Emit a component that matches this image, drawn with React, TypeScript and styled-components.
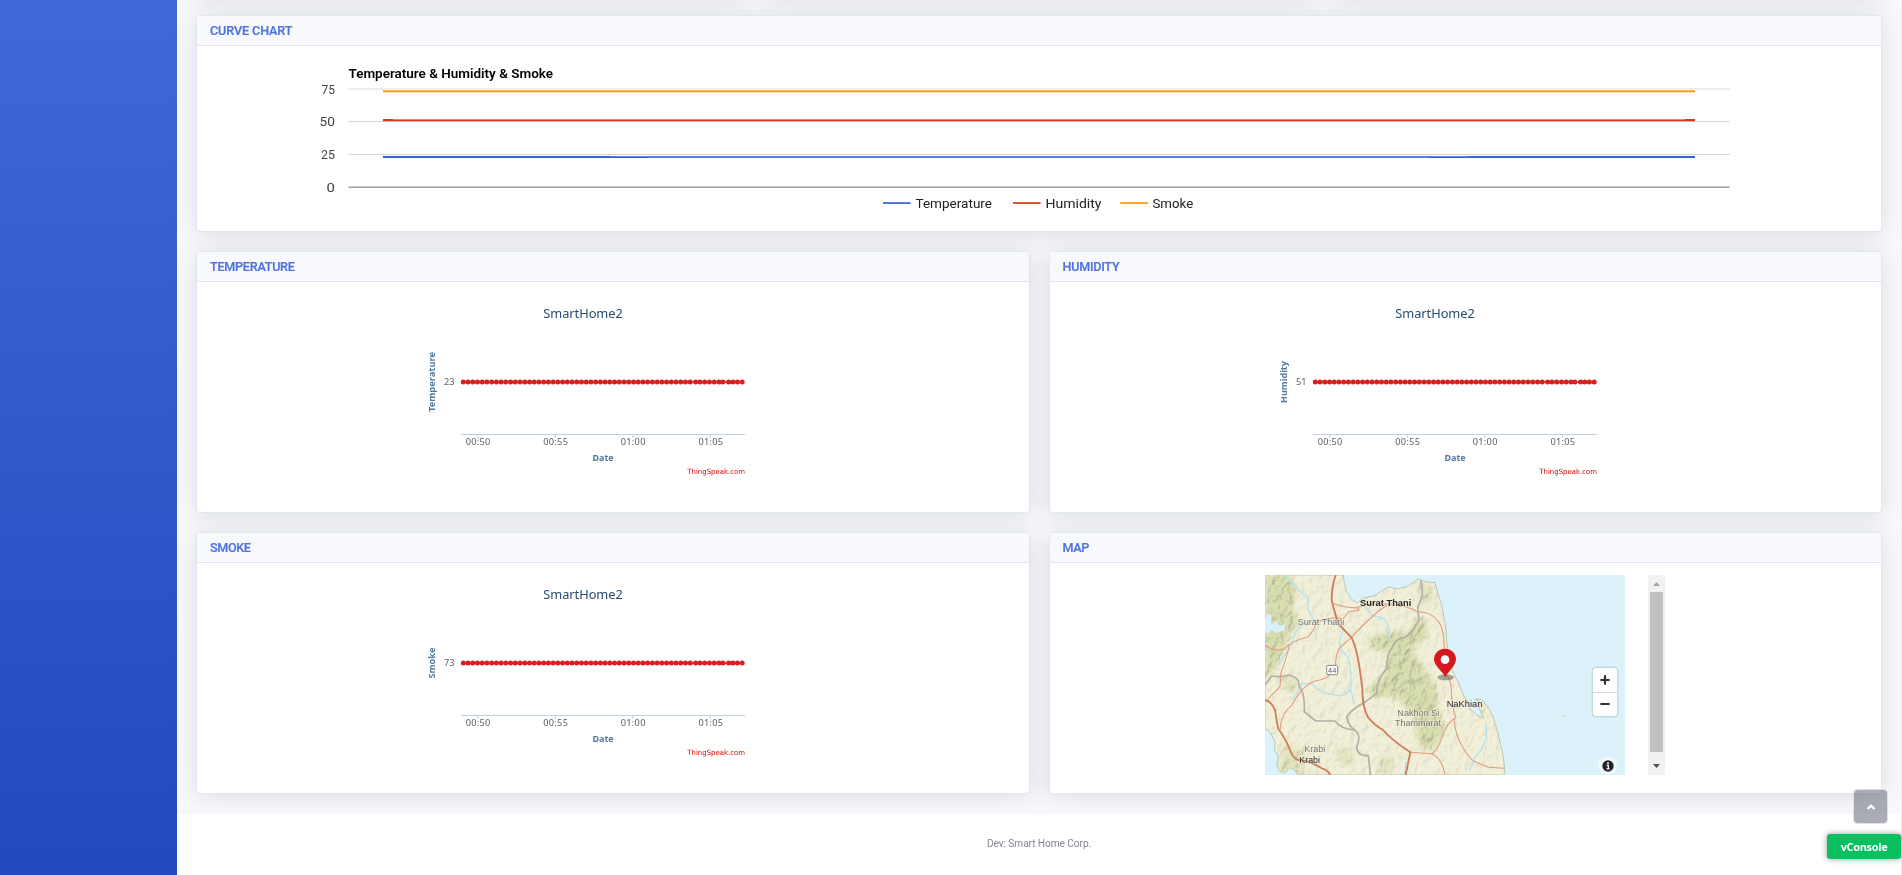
import React from 'react';
import styled, { createGlobalStyle } from 'styled-components';

const GlobalStyle = createGlobalStyle`
  * { box-sizing: border-box; }
  html, body { margin: 0; height: 100%; }
  body {
    overflow: hidden;
    font-family: Roboto, "Liberation Sans", sans-serif;
    background: #fff;
  }
`;

const Page = styled.div`
  display: flex;
  width: 100%;
  height: 875px;
  overflow: hidden;
`;

const Sidebar = styled.aside`
  flex: 0 0 177px;
  background: linear-gradient(180deg, #4168d7 0%, #224abe 100%);
`;

const Content = styled.div`
  flex: 1;
  min-width: 0;
  display: flex;
  flex-direction: column;
  border-right: 1px solid #ececf0;
`;

const Main = styled.main`
  display: flex;
  flex-direction: column;
  gap: 19px;
  height: 814px;
  padding: 0 19px;
  background: #f8f9fc;
`;

const Row = styled.div<{ $cols: number }>`
  display: grid;
  grid-template-columns: repeat(${p => p.$cols}, 1fr);
  gap: 19px;
`;

const SummaryRow = styled(Row)`
  margin-top: -44px;
`;

const Card = styled.section<{ $height: number }>`
  display: flex;
  flex-direction: column;
  height: ${p => p.$height}px;
  background: #fff;
  border: 1px solid #e3e6f0;
  border-radius: 4px;
  box-shadow: 0 2px 23px rgba(58, 59, 69, 0.15);
`;

const CardHeader = styled.header`
  flex: 0 0 30px;
  display: flex;
  align-items: center;
  padding: 1px 13px 0;
  background: #f8f9fc;
  border-bottom: 1px solid #e3e6f0;
  border-radius: 3px 3px 0 0;
`;

const CardTitle = styled.h6<{ $spacing: number }>`
  margin: 0;
  font-size: 12.6px;
  line-height: 16px;
  font-weight: 500;
  letter-spacing: ${p => p.$spacing}px;
  color: #4e73df;
  text-transform: uppercase;
  -webkit-text-stroke: 0.2px #4e73df;
`;

const CardBody = styled.div`
  display: flex;
  justify-content: center;
  padding-top: 12px;
`;

const Frame = styled.div`
  display: flex;
  justify-content: space-between;
  width: 400px;
  height: 200px;
`;

const MapView = styled.div`
  position: relative;
  width: 360px;
  height: 200px;
  overflow: hidden;
  background: #dcf2fb;
`;

const ZoomControl = styled.div`
  position: absolute;
  left: 328px;
  top: 93px;
  width: 24px;
  height: 48px;
  display: flex;
  flex-direction: column;
  background: #fff;
  border-radius: 3px;
  box-shadow: 0 0 0 1.5px rgba(0, 0, 0, 0.1);
`;

const ZoomButton = styled.button`
  flex: 1;
  display: flex;
  align-items: center;
  justify-content: center;
  padding: 0;
  border: 0;
  background: none;
  & + & { border-top: 1px solid #ddd; }
`;

const InfoButton = styled.div`
  position: absolute;
  left: 333px;
  top: 181px;
  display: flex;
  align-items: center;
  justify-content: center;
  width: 19px;
  height: 19px;
  border-radius: 50%;
  background: rgba(255, 255, 255, 0.5);
`;

const ScrollTrack = styled.div`
  display: flex;
  flex-direction: column;
  width: 17px;
  background: #f1f1f1;
`;

const ScrollArrow = styled.svg`
  width: 17px;
  height: 17px;
`;

const ScrollThumb = styled.div`
  width: 13px;
  height: 160px;
  margin: 0 2px 6px;
  background: #c1c1c1;
`;

const Footer = styled.footer`
  flex: 1;
  padding-top: 22px;
  text-align: center;
  font-size: 10.2px;
  line-height: 16px;
  letter-spacing: -0.1px;
  color: #858796;
  background: #fff;
`;

const ScrollTop = styled.a`
  position: fixed;
  left: 1853px;
  top: 789px;
  width: 35px;
  height: 35px;
  display: flex;
  align-items: center;
  justify-content: center;
  border: 1px solid #dddfeb;
  border-radius: 4px;
  background: rgba(90, 92, 105, 0.5);
  background-clip: padding-box;
`;

const ConsoleButton = styled.button`
  position: fixed;
  left: 1827px;
  top: 834px;
  width: 74px;
  height: 25px;
  padding: 0 0 1px;
  border: 0;
  border-radius: 3px;
  background: #07c160;
  color: #fff;
  font: 700 11px/23px "Open Sans", "Noto Sans", sans-serif;
  letter-spacing: -0.35px;
  box-shadow: 0 0 6px rgba(0, 0, 0, 0.4);
`;

const PlotSvg = styled.svg`
  display: block;
  flex: none;
`;

const SANS = 'Roboto, "Liberation Sans", sans-serif';
const HUMANIST = '"Noto Sans", "Open Sans", sans-serif';

const legend = [
  { name: 'Temperature', color: '#3366cc', x: 686, textX: 718.5, width: 76.5 },
  { name: 'Humidity', color: '#dc3912', x: 816, textX: 848.5, width: 56 },
  { name: 'Smoke', color: '#ff9900', x: 923.3, textX: 955.5, width: 40.7 },
];

const ticks = [
  { label: '75', text: 48, width: 13.5 },
  { label: '50', text: 80, width: 15.4 },
  { label: '25', text: 113, width: 14 },
  { label: '0', text: 146, width: 8.4 },
];

function CurveChart() {
  return (
    <PlotSvg width={1683} height={184} fontFamily={SANS} fontSize={13.5}>
      <text x={151.5} y={32} fontWeight={600} fontSize={13} textLength={204.5} lengthAdjust="spacingAndGlyphs">
        Temperature &amp; Humidity &amp; Smoke
      </text>
      {ticks.map(t => (
        <text key={t.label} x={138 - t.width} y={t.text} fill="#444" textLength={t.width} lengthAdjust="spacingAndGlyphs">
          {t.label}
        </text>
      ))}
      <rect x={151.4} y={42} width={1381.4} height={2} fill="#ededed" />
      <rect x={151.4} y={75} width={1381.4} height={1} fill="#d6d6d6" />
      <rect x={151.4} y={108} width={1381.4} height={1} fill="#d6d6d6" />
      <rect x={151.4} y={140} width={1381.4} height={1} fill="#c8c8c8" />
      <rect x={151.4} y={141} width={1381.4} height={1} fill="#a8a8a8" />
      <rect x={186} y={44.4} width={1312} height={1.9} fill="#ff9900" />
      <rect x={186} y={73.4} width={1312} height={1.8} fill="#dc3912" />
      <rect x={186} y={73} width={10} height={2} fill="#dc3912" />
      <rect x={1488} y={73} width={10} height={2} fill="#dc3912" />
      <rect x={186} y={110} width={1312} height={2} fill="#3366cc" />
      <rect x={413} y={110} width={38} height={1} fill="#5c85d6" />
      <rect x={451} y={110} width={781} height={2} fill="#5580d6" />
      <rect x={1232} y={110} width={40} height={1} fill="#5c85d6" />
      {legend.map(l => (
        <g key={l.name}>
          <rect x={l.x} y={156.2} width={27.6} height={1.7} fill={l.color} />
          <text x={l.textX} y={162} fill="#222" textLength={l.width} lengthAdjust="spacingAndGlyphs">{l.name}</text>
        </g>
      ))}
    </PlotSvg>
  );
}

const tail = [282.7, 287, 291.7, 296.5, 301.2, 305.9, 309.8, 315.6, 319.8, 324.4, 329.2];
const points = [...Array.from({ length: 49 }, (_, i) => 50.3 + i * 4.727), ...tail];

const times = [
  { label: '00:50', x: 64.7 },
  { label: '00:55', x: 142.3 },
  { label: '01:00', x: 219.8 },
  { label: '01:05', x: 297.4 },
];

function FieldChart({ field, value, length }: { field: string; value: string; length: number }) {
  return (
    <PlotSvg width={400} height={200} fontFamily={HUMANIST}>
      <text x={130.3} y={24} fontSize={12.8} fill="#274b6d" textLength={79.5}>SmartHome2</text>
      <text
        transform="translate(21.8 88) rotate(-90)"
        x={-length / 2}
        y={0}
        fontSize={9.6}
        fontWeight={700}
        fill="#54799f"
        textLength={length}
        lengthAdjust="spacingAndGlyphs"
      >
        {field}
      </text>
      <text x={31} y={91} fontSize={9.2} fill="#606060" textLength={10.4}>{value}</text>
      <path d="M48 140.5H332" stroke="#c0d0e0" />
      {times.map(t => (
        <g key={t.label}>
          <path d={`M${t.x} 140v4`} stroke="#c0d0e0" />
          <text x={t.x - 12} y={151} fontSize={9.2} fill="#606060" textLength={24.6}>{t.label}</text>
        </g>
      ))}
      <path d="M50 88H330" stroke="#d62020" strokeWidth={1.7} />
      {points.map((x, i) => <circle key={i} cx={x} cy={88} r={2.5} fill="#d62020" />)}
      <text x={179.5} y={167} fontSize={9.6} fontWeight={700} fill="#54799f" textLength={21.2} lengthAdjust="spacingAndGlyphs">Date</text>
      <text x={274.3} y={179.8} fontSize={7.2} fontFamily='"DejaVu Sans", sans-serif' fill="#d00" textLength={57.8} lengthAdjust="spacingAndGlyphs">
        ThingSpeak.com
      </text>
    </PlotSvg>
  );
}

const LAND =
  'M30 30H265L268 55 275 80 290 103 308 114 322 100 360 92 380 78 400 66 430 72 462 62 478 50 490 42 510 50 540 53 550 90 560 120 568 165 573 190 575 230 582 280 596 325 610 352 625 390 640 412 645 432 668 452 686 458 672 430 675 412 660 402 680 404 702 430 716 460 730 510 742 560 748 600 750 630H128L120 615 105 608 92 622 75 620 65 600 70 575 58 555 60 530 50 510 40 496 30 492Z';

const primaryRoads = [
  'M242 30Q230 65 230 105 240 150 252 178 272 200 290 218 305 250 314 310L322 370Q322 430 340 458 360 482 384 495 410 525 466 562L458 600 452 630',
  'M30 405Q48 408 60 435 64 465 70 492 92 520 108 562 116 580 130 585L160 590Q185 600 200 610 215 612 226 629',
];

const secondaryRoads = [
  'M395 120Q340 160 290 217L255 248Q240 268 242 310 220 345 180 348 140 362 110 422 78 445 76 492',
  'M30 240Q55 262 88 252 110 226 160 215 180 190 185 172 220 155 258 160',
  'M103 240Q92 290 78 322L75 365 40 400',
  'M238 116Q275 130 308 128L312 136 280 140Q268 162 248 168',
  'M300 130Q345 110 398 118 470 125 485 140 530 140 545 165 567 180 568 252',
  'M576 332Q590 345 590 400L598 445 603 458Q575 470 560 520 548 555 530 566L466 562',
  'M530 566Q560 578 570 629',
  'M597 460Q602 515 620 540 640 580 660 590L700 607 746 610',
];

const boundaries = [
  'M498 50Q505 75 500 98L488 128 492 165Q470 205 450 218 425 215 410 250 396 265 395 310 365 345 365 385L332 410Q290 432 275 455 280 485 305 500 318 515 305 545 305 572 340 572L346 628',
  'M30 360L50 333Q85 338 100 330 135 336 132 365 150 380 148 440L182 468 240 468Q260 494 300 495',
];

const rivers = [
  'M95 35L130 75 160 98 158 130 175 165 135 182Q118 200 110 240L70 300',
  'M175 165L230 170 265 190 252 235Q260 260 278 275 288 300 288 355 290 390 250 392 190 385 172 356L142 355 115 402',
  'M286 370L297 415',
  'M330 125L350 150 388 162 402 190 402 222',
  'M693 475L695 520 680 552 660 578 645 615',
  'M453 590L448 629',
];

interface Label { text: string; x: number; y: number; w: number; fill: string; bold?: boolean }
const labels: Label[] = [
  { text: 'Surat Thani', x: 315, y: 122, w: 154, fill: '#222', bold: true },
  { text: 'Surat Thani', x: 128, y: 181, w: 140, fill: '#76766f' },
  { text: 'Nakhon Si', x: 427, y: 452, w: 126, fill: '#76766f' },
  { text: 'Thammarat', x: 420, y: 482, w: 138, fill: '#76766f' },
  { text: 'NaKhian', x: 575, y: 425, w: 107, fill: '#222' },
  { text: 'Krabi', x: 148, y: 561, w: 63, fill: '#76766f' },
  { text: 'Krabi', x: 133, y: 595, w: 62, fill: '#222' },
];

function TerrainMap() {
  return (
    <MapView>
      <PlotSvg width={360} height={200} viewBox="30 30 1080 600">
        <defs>
          <clipPath id="land"><path d={LAND} /></clipPath>
          <filter id="soft" x="-20%" y="-20%" width="140%" height="140%"><feGaussianBlur stdDeviation="8" /></filter>
          <filter id="relief" x="0" y="0" width="100%" height="100%" colorInterpolationFilters="sRGB">
            <feTurbulence type="fractalNoise" baseFrequency="0.055 0.04" numOctaves={3} seed={7} />
            <feColorMatrix values="0 0 0 0 0 0 0 0 0 0 0 0 0 0 0 1 0 0 0 0" result="height" />
            <feDiffuseLighting in="height" surfaceScale={14} diffuseConstant={1.15} lightingColor="#ffffff">
              <feDistantLight azimuth={225} elevation={60} />
            </feDiffuseLighting>
          </filter>
          <mask id="hills">
            <g fill="#fff" filter="url(#soft)">
              <path d="M30 30H105L125 70 112 130 135 170 105 210 85 260 50 330 30 340Z" />
              <path d="M335 220L400 200 455 205 490 150 512 170 520 215 470 250 505 310 545 360 545 420 570 490 530 560 490 540 470 440 420 395 350 395 335 375 390 330 400 260 350 250Z" />
              <path d="M70 330L135 345 120 385 90 380ZM85 540L145 550 150 630H70ZM240 545L300 560 290 610 250 590ZM480 50L530 60 540 110 500 120Z" opacity=".6" />
              <path d="M370 580L420 570 410 629H370ZM655 420L685 430 695 470 675 460Z" opacity=".6" />
            </g>
          </mask>
        </defs>
        <rect x="30" y="30" width="1080" height="600" fill="#dcf2fb" />
        <path d={LAND} fill="#f2efd6" stroke="#b9c6b8" strokeWidth="3" />
        <g clipPath="url(#land)">
          <rect x="30" y="30" width="730" height="600" filter="url(#relief)" opacity=".08" style={{ mixBlendMode: 'multiply' }} />
          <g mask="url(#hills)">
            <rect x="30" y="30" width="730" height="600" fill="#d9deb0" />
            <rect x="30" y="30" width="730" height="600" filter="url(#relief)" opacity=".22" style={{ mixBlendMode: 'multiply' }} />
          </g>
          <path d="M30 170L38 145 48 150 50 178 65 168 72 182 92 178 88 196 65 204 50 196 40 206 30 200Z" fill="#d8f1fa" />
        </g>
        <g fill="none" strokeLinecap="round" strokeLinejoin="round">
          <g stroke="#b2e2f2" strokeWidth="4">{rivers.map(d => <path key={d} d={d} />)}</g>
          <g stroke="#b1afa6" strokeWidth="5">{boundaries.map(d => <path key={d} d={d} />)}</g>
          <g stroke="#e09b80" strokeWidth="3.2">{secondaryRoads.map(d => <path key={d} d={d} />)}</g>
          <g stroke="#d07d5c" strokeWidth="5.6">{primaryRoads.map(d => <path key={d} d={d} />)}</g>
        </g>
        <rect x="215" y="301" width="33" height="28" rx="4" fill="#fff" stroke="#888" strokeWidth="3" />
        <g fontFamily='"Liberation Sans", Arial, sans-serif' fontSize="25">
          <text x="219" y="323" fontSize="22" fill="#555" textLength="25">44</text>
          {labels.map((l, i) => (
            <text
              key={i}
              x={l.x}
              y={l.y}
              fill={l.fill}
              fontWeight={l.bold ? 700 : 400}
              textLength={l.w}
              lengthAdjust="spacingAndGlyphs"
              stroke="#f8f6e6"
              strokeOpacity=".5"
              strokeWidth="4"
              paintOrder="stroke"
            >
              {l.text}
            </text>
          ))}
        </g>
        <ellipse cx="572" cy="337" rx="25" ry="9" fill="#555" opacity=".5" />
        <path d="M571 338C565 320 537 303 537 283A33 32 0 0 1 603 283C603 303 578 320 571 338Z" fill="#d7191f" />
        <circle cx="570" cy="284" r="13" fill="#fff" />
        <rect x="925" y="452" width="6" height="4" fill="#c5cfc8" />
      </PlotSvg>
      <ZoomControl>
        <ZoomButton aria-label="Zoom in">
          <svg width="10" height="10" viewBox="0 0 10 10"><path d="M5 1.2v7.6M1.2 5h7.6" stroke="#333" strokeWidth="2.2" strokeLinecap="round" /></svg>
        </ZoomButton>
        <ZoomButton aria-label="Zoom out">
          <svg width="10" height="10" viewBox="0 0 10 10"><path d="M1.2 5h7.6" stroke="#333" strokeWidth="2.2" strokeLinecap="round" /></svg>
        </ZoomButton>
      </ZoomControl>
      <InfoButton>
        <svg width="12" height="12" viewBox="0 0 12 12">
          <circle cx="6" cy="6" r="5.7" fill="#222" />
          <circle cx="6" cy="3.2" r="1" fill="#fff" />
          <path d="M4.7 5.3H6.3V8.6M4.5 8.9H7.6" stroke="#fff" strokeWidth="1.3" fill="none" />
        </svg>
      </InfoButton>
    </MapView>
  );
}

export default function App() {
  return (
    <>
      <GlobalStyle />
      <Page>
        <Sidebar />
        <Content>
          <Main>
            <SummaryRow $cols={3}>
              <Card $height={40} />
              <Card $height={40} />
              <Card $height={40} />
            </SummaryRow>
            <Card $height={217}>
              <CardHeader><CardTitle $spacing={-0.1}>Curve Chart</CardTitle></CardHeader>
              <CurveChart />
            </Card>
            <Row $cols={2}>
              <Card $height={262}>
                <CardHeader><CardTitle $spacing={-0.25}>Temperature</CardTitle></CardHeader>
                <CardBody><Frame><FieldChart field="Temperature" value="23" length={60} /></Frame></CardBody>
              </Card>
              <Card $height={262}>
                <CardHeader><CardTitle $spacing={-0.25}>Humidity</CardTitle></CardHeader>
                <CardBody><Frame><FieldChart field="Humidity" value="51" length={42} /></Frame></CardBody>
              </Card>
              <Card $height={262}>
                <CardHeader><CardTitle $spacing={-0.35}>Smoke</CardTitle></CardHeader>
                <CardBody><Frame><FieldChart field="Smoke" value="73" length={31} /></Frame></CardBody>
              </Card>
              <Card $height={262}>
                <CardHeader><CardTitle $spacing={-0.35}>Map</CardTitle></CardHeader>
                <CardBody>
                  <Frame>
                    <TerrainMap />
                    <ScrollTrack>
                      <ScrollArrow viewBox="0 0 17 17"><path d="M5 11L8.5 7 12 11Z" fill="#a3a3a3" /></ScrollArrow>
                      <ScrollThumb />
                      <ScrollArrow viewBox="0 0 17 17"><path d="M5 6L8.5 10 12 6Z" fill="#505050" /></ScrollArrow>
                    </ScrollTrack>
                  </Frame>
                </CardBody>
              </Card>
            </Row>
          </Main>
          <Footer>Dev: Smart Home Corp.</Footer>
        </Content>
        <ScrollTop href="#">
          <svg width="10" height="8" viewBox="0 0 10 8"><path d="M1.5 6L5 2.6 8.5 6" fill="none" stroke="#fff" strokeWidth="2.2" /></svg>
        </ScrollTop>
        <ConsoleButton>vConsole</ConsoleButton>
      </Page>
    </>
  );
}
